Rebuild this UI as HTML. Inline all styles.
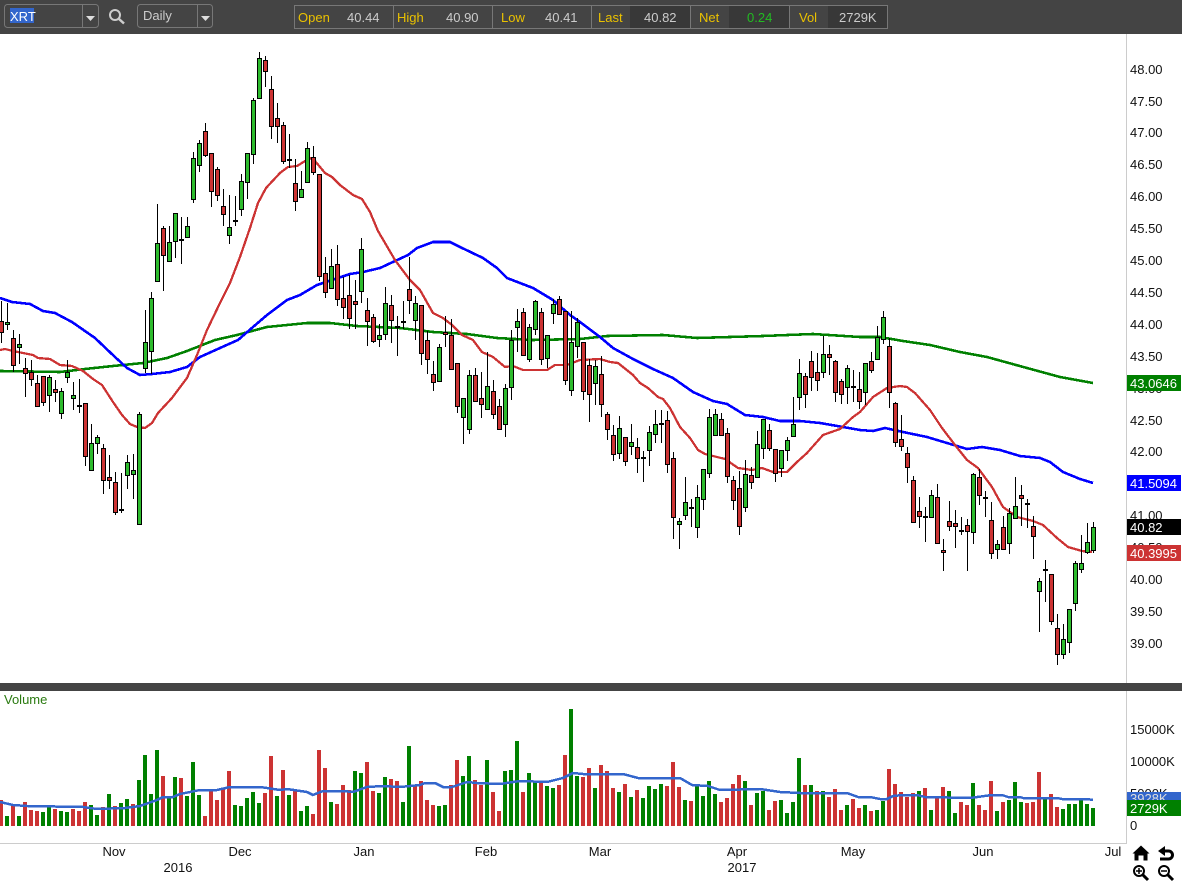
<!DOCTYPE html>
<html><head><meta charset="utf-8"><title>XRT</title>
<style>
html,body{margin:0;padding:0;background:#fff;width:1182px;height:883px;overflow:hidden}
svg{display:block;font-family:"Liberation Sans",Arial,sans-serif;font-size:13px}
</style></head><body>
<svg width="1182" height="883" viewBox="0 0 1182 883" xmlns="http://www.w3.org/2000/svg">
<rect width="1182" height="883" fill="#fff"/>
<!-- toolbar -->
<rect width="1182" height="34" fill="#444"/>
<g fill="none" stroke="#777">
<rect x="4.5" y="4.5" width="94" height="23" rx="3"/><path d="M82.5 4.5V27.5"/>
<rect x="137.5" y="4.5" width="75" height="23" rx="3"/><path d="M197.5 4.5V27.5"/>
<rect x="294.5" y="5.5" width="593" height="23"/>
</g>
<rect x="10" y="8" width="24" height="15" fill="#3366cc"/>
<text x="10" y="21" fill="#fff">XRT</text>
<path d="M86 16h9l-4.5 5z" fill="#ddd"/>
<path d="M201 16h9l-4.5 5z" fill="#ddd"/>
<circle cx="115" cy="15" r="5" fill="none" stroke="#ccc" stroke-width="2"/>
<path d="M119 19l5 4.500" stroke="#ccc" stroke-width="2.5" fill="none"/>
<text x="143" y="20" fill="#ccc">Daily</text>
<rect x="630" y="6" width="60" height="22" fill="#383838"/>
<rect x="729" y="6" width="60" height="22" fill="#383838"/>
<rect x="828" y="6" width="59" height="22" fill="#383838"/>
<path d="M393.5 5.5V28.5M492.5 5.5V28.5M591.5 5.5V28.5M690.5 5.5V28.5M789.5 5.5V28.5" stroke="#777" fill="none"/>
<g fill="#eac100">
<text x="298" y="22">Open</text><text x="397" y="22">High</text><text x="501" y="22">Low</text><text x="598" y="22">Last</text><text x="699" y="22">Net</text><text x="799" y="22">Vol</text>
</g>
<g fill="#ccc">
<text x="347" y="22">40.44</text><text x="446" y="22">40.90</text><text x="545" y="22">40.41</text><text x="644" y="22">40.82</text><text x="839" y="22">2729K</text>
</g>
<text x="747" y="22" fill="#22bb22">0.24</text>

<!-- axes -->
<path d="M1126.5 34V843" stroke="#ccc" fill="none"/>
<path d="M0 843.5H1127" stroke="#ccc" fill="none"/>
<g fill="#111">
<text x="1130" y="74">48.00</text><text x="1130" y="106">47.50</text><text x="1130" y="137">47.00</text><text x="1130" y="169">46.50</text><text x="1130" y="201">46.00</text><text x="1130" y="233">45.50</text><text x="1130" y="265">45.00</text><text x="1130" y="297">44.50</text><text x="1130" y="329">44.00</text><text x="1130" y="361">43.50</text><text x="1130" y="393">43.00</text><text x="1130" y="425">42.50</text><text x="1130" y="456">42.00</text><text x="1130" y="520">41.00</text><text x="1130" y="552">40.50</text><text x="1130" y="584">40.00</text><text x="1130" y="616">39.50</text><text x="1130" y="648">39.00</text>
</g>
<!-- moving averages -->
<g fill="none" shape-rendering="crispEdges">
<path stroke="#008000" stroke-width="2.6" d="M0 371L60 372L85 369L113 366L143 363L167 358L187 351L215 340L237 335L267 327L307 323L330 323L357 326L400 328L433 332L467 334L497 338L533 340L580 339L607 336L663 335L697 338L763 336L813 334L860 337L880 337L903 341L930 345L960 352L987 357L1027 368L1060 377L1093 383"/>
<path stroke="#0000ff" stroke-width="2.6" d="M0 298L12 302L30 304L43 311L55 313L72 322L95 338L115 357L127 368L140 375L152 374L170 372L187 367L200 357L220 348L238 340L253 327L267 315L287 300L300 295L317 285L350 274L363 272L380 268L408 255L417 248L433 242L450 242L460 247L483 258L497 268L507 278L533 288L553 300L570 315L580 322L600 337L613 348L633 359L653 369L673 378L693 392L713 401L727 404L745 415L763 417L780 421L800 421L820 423L843 427L860 430L873 431L885 428L903 432L927 437L957 446L967 449L982 447L1000 450L1020 456L1040 458L1050 462L1063 472L1080 479L1093 483"/>
<path stroke="#cc3333" stroke-width="2.3" d="M0 350L5 349L13 351L33 355L38 358L50 359L60 365L72 366L83 371L93 379L102 385L113 402L122 415L130 424L137 427L145 428L152 423L158 413L172 398L187 378L197 355L207 330L220 303L230 283L240 257L250 228L258 203L266 188L280 173L288 167L297 166L310 158L315 161L325 173L332 177L340 185L353 195L362 199L370 212L378 231L395 260L410 280L420 290L433 313L443 318L452 325L462 335L473 340L482 352L493 357L505 367L513 366L523 370L547 370L555 365L567 365L580 360L600 359L610 362L618 363L633 375L640 383L648 388L658 397L663 399L670 408L680 427L690 438L698 450L705 454L713 456L725 459L738 468L752 470L762 468L773 472L787 472L797 462L807 453L823 435L840 429L853 417L860 412L873 397L887 388L900 386L907 387L915 393L930 410L942 428L955 445L967 460L978 468L992 487L1003 507L1017 517L1033 521L1043 525L1057 538L1068 547L1082 551L1092 552"/>
</g>
<!-- wicks -->
<path stroke="#000" fill="none" d="M1.5 301V343M7.5 303V330M13.5 330V372M19.5 334V364M25.5 358V397M31.5 360V386M37.5 375V407M43.5 376V406M49.5 375V412M55.5 380V402M61.5 388V419M67.5 360V383M73.5 382V410M79.5 379V413M85.5 403V466M91.5 424V471M97.5 435V454M103.5 444V494M109.5 455V489M115.5 472V515M121.5 473V513M127.5 455V489M133.5 454V499M139.5 412V525M145.5 310V373M151.5 292V374M157.5 204V282M163.5 226V291M169.5 226V262M175.5 213V258M181.5 217V264M187.5 217V238M193.5 152V203M199.5 140V172M205.5 123V157M211.5 153V207M217.5 167V201M223.5 189V226M229.5 195V244M235.5 196V226M241.5 174V216M247.5 153V199M253.5 98V164M259.5 52V99M265.5 56V87M271.5 76V139M277.5 103V143M283.5 122V164M289.5 134V168M295.5 159V211M301.5 171V198M307.5 142V183M313.5 146V175M319.5 174V281M325.5 257V298M331.5 249V289M337.5 245V306M343.5 277V319M349.5 275V329M355.5 280V329M361.5 238V303M367.5 298V346M373.5 314V343M379.5 324V347M385.5 287V340M391.5 295V343M397.5 316V356M403.5 301V329M409.5 257V314M415.5 296V340M421.5 305V365M427.5 331V374M433.5 361V391M439.5 344V382M445.5 316V347M451.5 319V370M457.5 363V413M463.5 398V444M469.5 370V434M475.5 368V402M481.5 372V418M487.5 352V410M493.5 380V419M499.5 399V430M505.5 384V437M511.5 330V400M517.5 309V352M523.5 308V356M529.5 324V362M535.5 300V335M541.5 308V365M547.5 335V368M553.5 299V324M559.5 296V315M565.5 311V385M571.5 311V396M577.5 318V358M583.5 342V400M589.5 359V422M595.5 360V405M601.5 356V417M607.5 412V440M613.5 425V461M619.5 416V459M625.5 437V466M631.5 424V455M637.5 438V473M643.5 451V482M649.5 426V466M655.5 410V443M661.5 410V443M667.5 411V473M673.5 452V539M679.5 518V549M685.5 477V520M691.5 499V527M697.5 485V538M703.5 469V510M709.5 409V478M715.5 409V436M721.5 413V436M727.5 428V483M733.5 476V510M739.5 471V535M745.5 460V512M751.5 467V489M757.5 431V478M763.5 419V459M769.5 424V451M775.5 449V482M781.5 450V477M787.5 437V461M793.5 397V437M799.5 359V410M805.5 373V408M811.5 351V391M817.5 353V391M823.5 336V378M829.5 345V375M835.5 360V402M841.5 379V404M847.5 365V404M853.5 370V402M859.5 372V409M865.5 363V405M871.5 352V373M877.5 326V360M883.5 311V344M889.5 338V408M895.5 402V447M901.5 415V451M907.5 447V483M913.5 476V523M919.5 497V528M925.5 507V542M931.5 490V518M937.5 484V544M943.5 539V571M949.5 501V531M955.5 510V548M961.5 517V535M967.5 519V571M973.5 473V544M979.5 469V505M985.5 491V517M991.5 502V559M997.5 540V559M1003.5 516V550M1009.5 508V554M1015.5 477V519M1021.5 485V526M1027.5 499V528M1033.5 516V559M1039.5 578V632M1045.5 560V602M1051.5 574V625M1057.5 614V665M1063.5 624V659M1069.5 609V653M1075.5 561V611M1081.5 535V573M1087.5 523V554M1093.5 522V553"/>
<!-- dojis -->
<path stroke="#000" stroke-width="2" fill="none" d="M179 240h5M233 221h5M641 458h5M659 424h5M851 387h5M923 517h5M959 531h5M1025 504h5M1043 570h5"/>
<!-- red bodies -->
<path fill="#cc3333" stroke="#000" d="M-.5 321.5h4v11h-4zM11.5 338.5h4v27h-4zM23.5 368.5h4v5h-4zM29.5 372.5h4v7h-4zM35.5 383.5h4v23h-4zM41.5 376.5h4v26h-4zM53.5 389.5h4v3h-4zM83.5 403.5h4v53h-4zM101.5 448.5h4v32h-4zM107.5 477.5h4v3h-4zM113.5 482.5h4v30h-4zM119.5 509.5h4v1h-4zM161.5 228.5h4v27h-4zM203.5 131.5h4v24h-4zM209.5 153.5h4v38h-4zM215.5 169.5h4v26h-4zM221.5 206.5h4v8h-4zM263.5 60.5h4v11h-4zM269.5 89.5h4v37h-4zM275.5 118.5h4v8h-4zM281.5 125.5h4v36h-4zM287.5 159.5h4v1h-4zM293.5 183.5h4v18h-4zM311.5 157.5h4v15h-4zM317.5 174.5h4v102h-4zM323.5 273.5h4v19h-4zM335.5 264.5h4v35h-4zM341.5 298.5h4v9h-4zM347.5 295.5h4v23h-4zM353.5 301.5h4v3h-4zM365.5 310.5h4v11h-4zM371.5 317.5h4v24h-4zM389.5 305.5h4v15h-4zM401.5 321.5h4v1h-4zM407.5 289.5h4v11h-4zM419.5 305.5h4v48h-4zM425.5 340.5h4v19h-4zM431.5 374.5h4v8h-4zM443.5 332.5h4v2h-4zM449.5 335.5h4v34h-4zM455.5 363.5h4v43h-4zM473.5 375.5h4v26h-4zM479.5 398.5h4v6h-4zM491.5 391.5h4v23h-4zM497.5 406.5h4v23h-4zM521.5 312.5h4v43h-4zM539.5 312.5h4v47h-4zM557.5 299.5h4v15h-4zM563.5 311.5h4v69h-4zM581.5 342.5h4v49h-4zM587.5 365.5h4v29h-4zM599.5 374.5h4v30h-4zM605.5 414.5h4v15h-4zM611.5 435.5h4v19h-4zM623.5 437.5h4v24h-4zM635.5 447.5h4v11h-4zM665.5 420.5h4v44h-4zM671.5 458.5h4v59h-4zM689.5 507.5h4v1h-4zM719.5 419.5h4v16h-4zM725.5 433.5h4v43h-4zM731.5 480.5h4v20h-4zM737.5 488.5h4v38h-4zM749.5 475.5h4v7h-4zM767.5 430.5h4v18h-4zM773.5 449.5h4v24h-4zM803.5 376.5h4v18h-4zM809.5 361.5h4v16h-4zM815.5 372.5h4v8h-4zM827.5 354.5h4v3h-4zM833.5 361.5h4v31h-4zM839.5 381.5h4v13h-4zM857.5 389.5h4v12h-4zM869.5 361.5h4v9h-4zM887.5 346.5h4v46h-4zM893.5 403.5h4v39h-4zM899.5 439.5h4v7h-4zM905.5 453.5h4v14h-4zM911.5 480.5h4v42h-4zM917.5 511.5h4v5h-4zM935.5 497.5h4v46h-4zM941.5 550.5h4v2h-4zM947.5 521.5h4v5h-4zM953.5 523.5h4v3h-4zM965.5 525.5h4v6h-4zM977.5 477.5h4v18h-4zM989.5 520.5h4v33h-4zM1001.5 527.5h4v22h-4zM1019.5 495.5h4v3h-4zM1031.5 526.5h4v10h-4zM1049.5 574.5h4v47h-4zM1055.5 628.5h4v26h-4z"/>
<!-- green bodies -->
<path fill="#2dbb2d" stroke="#000" d="M5.5 322.5h4v2h-4zM17.5 344.5h4v3h-4zM47.5 377.5h4v18h-4zM59.5 391.5h4v22h-4zM65.5 372.5h4v5h-4zM71.5 395.5h4v3h-4zM77.5 405.5h4v1h-4zM89.5 443.5h4v27h-4zM95.5 437.5h4v6h-4zM125.5 462.5h4v13h-4zM131.5 470.5h4v4h-4zM137.5 414.5h4v110h-4zM143.5 342.5h4v26h-4zM149.5 298.5h4v53h-4zM155.5 243.5h4v38h-4zM167.5 242.5h4v19h-4zM173.5 213.5h4v28h-4zM185.5 226.5h4v11h-4zM191.5 158.5h4v41h-4zM197.5 143.5h4v22h-4zM227.5 227.5h4v8h-4zM239.5 181.5h4v28h-4zM245.5 153.5h4v29h-4zM251.5 100.5h4v54h-4zM257.5 58.5h4v40h-4zM299.5 189.5h4v8h-4zM305.5 148.5h4v34h-4zM329.5 266.5h4v22h-4zM359.5 249.5h4v42h-4zM377.5 335.5h4v4h-4zM383.5 303.5h4v31h-4zM395.5 326.5h4v1h-4zM413.5 303.5h4v17h-4zM437.5 347.5h4v34h-4zM461.5 398.5h4v19h-4zM467.5 375.5h4v54h-4zM485.5 386.5h4v23h-4zM503.5 388.5h4v36h-4zM509.5 340.5h4v47h-4zM515.5 321.5h4v6h-4zM527.5 327.5h4v32h-4zM533.5 301.5h4v28h-4zM545.5 335.5h4v23h-4zM551.5 304.5h4v9h-4zM569.5 342.5h4v48h-4zM575.5 322.5h4v24h-4zM593.5 366.5h4v17h-4zM617.5 428.5h4v25h-4zM629.5 442.5h4v4h-4zM647.5 432.5h4v18h-4zM653.5 424.5h4v10h-4zM677.5 521.5h4v3h-4zM683.5 502.5h4v13h-4zM695.5 497.5h4v30h-4zM701.5 469.5h4v30h-4zM707.5 417.5h4v56h-4zM713.5 414.5h4v21h-4zM743.5 474.5h4v33h-4zM755.5 444.5h4v33h-4zM761.5 419.5h4v29h-4zM779.5 450.5h4v18h-4zM785.5 440.5h4v10h-4zM791.5 424.5h4v12h-4zM797.5 373.5h4v24h-4zM821.5 354.5h4v18h-4zM845.5 368.5h4v19h-4zM863.5 363.5h4v29h-4zM875.5 337.5h4v22h-4zM881.5 317.5h4v22h-4zM929.5 495.5h4v22h-4zM971.5 474.5h4v58h-4zM983.5 497.5h4v1h-4zM995.5 544.5h4v5h-4zM1007.5 513.5h4v30h-4zM1013.5 506.5h4v12h-4zM1037.5 581.5h4v10h-4zM1061.5 639.5h4v15h-4zM1067.5 609.5h4v33h-4zM1073.5 563.5h4v40h-4zM1079.5 563.5h4v6h-4zM1085.5 542.5h4v10h-4zM1091.5 527.5h4v23h-4z"/>
<!-- value tags -->
<rect x="1127" y="375" width="54" height="16" fill="#008000"/>
<rect x="1127" y="475" width="54" height="16" fill="#0000ff"/>
<rect x="1127" y="519" width="54" height="16" fill="#000"/>
<rect x="1127" y="545" width="54" height="16" fill="#cc3333"/>
<g fill="#fff">
<text x="1130" y="388">43.0646</text><text x="1130" y="488">41.5094</text><text x="1130" y="532">40.82</text><text x="1130" y="558">40.3995</text>
</g>
<!-- separator -->
<rect y="683" width="1182" height="8" fill="#444"/>
<text x="4" y="704" fill="#2a7a10">Volume</text>
<!-- volume bars -->
<path stroke="#cc3333" stroke-width="4" fill="none" shape-rendering="crispEdges" d="M1 800V826M13 804V826M25 802V826M31 810V826M37 811V826M55 809V826M73 809V826M79 811V826M85 802V826M103 807V826M115 806V826M133 804V826M163 776V826M181 778V826M205 816V826M211 790V826M217 800V826M223 789V826M229 771V826M265 793V826M271 756V826M283 770V826M295 790V826M313 814V826M319 750V826M325 768V826M337 804V826M343 785V826M349 790V826M367 762V826M373 791V826M391 779V826M397 781V826M415 785V826M421 781V826M427 800V826M433 805V826M451 785V826M457 760V826M475 780V826M481 785V826M493 792V826M499 811V826M523 792V826M541 782V826M559 785V826M565 755V826M583 777V826M589 768V826M601 765V826M607 771V826M613 788V826M625 784V826M637 790V826M667 786V826M673 762V826M679 787V826M691 801V826M721 802V826M727 798V826M733 784V826M739 775V826M751 805V826M769 810V826M775 801V826M805 785V826M817 791V826M829 797V826M835 789V826M841 810V826M853 799V826M859 808V826M871 811V826M889 769V826M895 784V826M901 792V826M907 797V826M913 793V826M925 788V826M937 797V826M943 787V826M961 802V826M967 805V826M979 805V826M985 810V826M991 781V826M1003 802V826M1027 803V826M1033 802V826M1039 772V826M1051 794V826M1057 807V826"/>
<path stroke="#008000" stroke-width="4" fill="none" shape-rendering="crispEdges" d="M7 816V826M19 816V826M43 812V826M49 805V826M61 811V826M67 812V826M91 805V826M97 815V826M109 794V826M121 803V826M127 799V826M139 780V826M145 755V826M151 794V826M157 750V826M169 797V826M175 777V826M187 796V826M193 762V826M199 795V826M235 805V826M241 806V826M247 798V826M253 792V826M259 803V826M277 796V826M289 795V826M301 811V826M307 806V826M331 802V826M355 771V826M361 773V826M379 793V826M385 777V826M403 802V826M409 746V826M439 806V826M445 805V826M463 776V826M469 756V826M487 760V826M505 771V826M511 770V826M517 741V826M529 773V826M535 782V826M547 786V826M553 788V826M571 709V826M577 776V826M595 788V826M619 792V826M631 797V826M643 798V826M649 786V826M655 789V826M661 784V826M685 800V826M697 786V826M703 796V826M709 781V826M715 794V826M745 781V826M757 793V826M763 791V826M781 800V826M787 813V826M793 802V826M799 758V826M811 785V826M823 791V826M847 805V826M865 805V826M877 810V826M883 801V826M919 791V826M931 810V826M949 791V826M955 813V826M973 783V826M997 811V826M1009 800V826M1015 782V826M1021 802V826M1045 798V826M1063 809V826M1069 804V826M1075 804V826M1081 800V826M1087 804V826M1093 808V826"/>
<path stroke="#3366cc" stroke-width="2.5" fill="none" shape-rendering="crispEdges" d="M0 802L13 805L27 806L83 807L97 809L125 808L140 806L157 800L163 797L173 797L180 794L200 790L217 790L230 787L260 787L267 788L280 790L287 789L307 792L313 795L323 791L343 791L353 792L367 787L383 786L400 787L420 785L425 783L435 783L443 787L452 787L467 782L477 783L500 784L520 781L547 782L563 778L573 773L583 774L623 774L638 778L680 778L692 785L708 786L720 790L760 789L780 792L800 793L847 793L858 797L870 797L880 799L887 799L893 796L903 795L917 795L925 797L970 798L992 795L1002 795L1008 797L1020 797L1023 798L1057 798L1062 799L1087 799L1093 800"/>
<!-- volume axis -->
<g fill="#111">
<text x="1130" y="734">15000K</text><text x="1130" y="766">10000K</text><text x="1130" y="798">5000K</text><text x="1130" y="830">0</text>
</g>
<rect x="1127" y="792" width="54" height="8" fill="#3366cc"/>
<text x="1130" y="803" fill="#ddd">3928K</text>
<rect x="1127" y="800" width="54" height="16" fill="#008000"/>
<text x="1130" y="813" fill="#fff">2729K</text>
<!-- date axis -->
<g fill="#111" text-anchor="middle">
<text x="114" y="856">Nov</text><text x="240" y="856">Dec</text><text x="364" y="856">Jan</text><text x="486" y="856">Feb</text><text x="600" y="856">Mar</text><text x="737" y="856">Apr</text><text x="853" y="856">May</text><text x="983" y="856">Jun</text><text x="1113" y="856">Jul</text>
<text x="178" y="872">2016</text><text x="742" y="872">2017</text>
</g>
<!-- bottom-right icons -->
<path d="M1141 845.5L1149.5 853.5H1147.5V860.5H1143.5V855.5H1138.5V860.5H1134.5V853.5H1132.5Z" fill="#000"/>
<path d="M1158 851L1165 846V856Z" fill="#000"/>
<path d="M1163 851H1168.5a4 4 0 0 1 0 8H1160" fill="none" stroke="#000" stroke-width="3"/>
<g fill="none" stroke="#000">
<circle cx="1139" cy="871" r="5" stroke-width="2"/><path d="M1143 875l5 5" stroke-width="3"/><path d="M1136 871h6M1139 868v6" stroke-width="1.5"/>
<circle cx="1164" cy="871" r="5" stroke-width="2"/><path d="M1168 875l5 5" stroke-width="3"/><path d="M1161 871h6" stroke-width="1.5"/>
</g>
</svg>
</body></html>
